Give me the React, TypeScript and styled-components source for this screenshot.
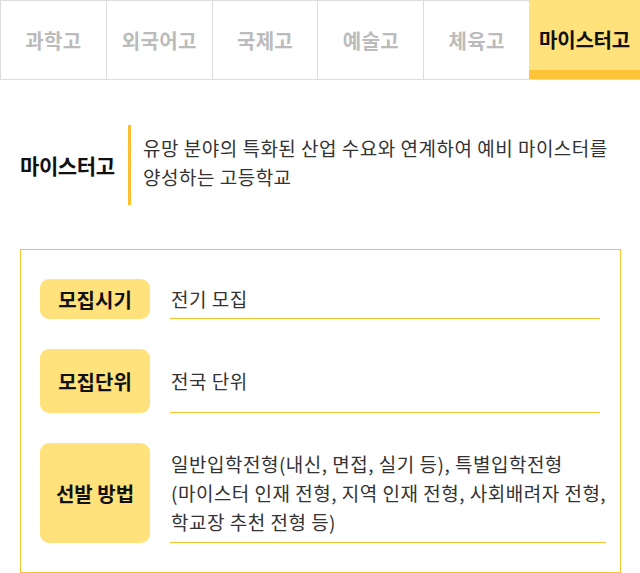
import React from "react";
import styled, { createGlobalStyle } from "styled-components";

const Global = createGlobalStyle`
  html, body { margin: 0; padding: 0; background: #fff; }
  body { font-family: "Noto Sans CJK KR", "Noto Sans", sans-serif; color: #222; }
  * { box-sizing: border-box; }
`;

const Page = styled.div`
  width: 640px;
  height: 573px;
  overflow: hidden;
`;

const Tabs = styled.nav`
  display: flex;
  height: 80px;
  border-top: 1px solid #dddddd;
  border-bottom: 1px solid #dddddd;
`;

const Tab = styled.div<{ $active?: boolean }>`
  display: flex;
  align-items: center;
  justify-content: center;
  font-size: 20px;
  font-weight: 700;
  letter-spacing: ${(p) => (p.$active ? "-0.2px" : "0.3px")};
  color: ${(p) => (p.$active ? "#111" : "#bbbbbb")};
  background: ${(p) => (p.$active ? "#ffe27c" : "#fff")};
  border-left: ${(p) => (p.$active ? "none" : "1px solid #dddddd")};
  margin-top: ${(p) => (p.$active ? "-1px" : "0")};
  border-bottom: ${(p) => (p.$active ? "9px solid #ffc338" : "none")};
  padding-top: ${(p) => (p.$active ? "8px" : "1px")};
  flex: ${(p) => (p.$active ? "0 0 111px" : "1")};
`;

const Intro = styled.section`
  display: flex;
  align-items: stretch;
  margin: 45px 0 0 20px;
  height: 80px;
`;

const IntroTitle = styled.h2`
  margin: 0;
  width: 108px;
  display: flex;
  align-items: center;
  font-size: 21px;
  font-weight: 700;
  letter-spacing: -0.4px;
  color: #111;
`;

const Divider = styled.div`
  width: 3px;
  background: #ffbe2e;
`;

const IntroText = styled.p`
  margin: 0 0 0 12px;
  padding-bottom: 6px;
  align-self: center;
  font-size: 19px;
  line-height: 29px;
  color: #333;
  letter-spacing: 0.5px;
  white-space: nowrap;
`;

const Box = styled.section`
  margin: 44px 19px 0 20px;
  border: 1px solid #ffc02e;
  padding: 29px 20px 29px 19px;
  display: flex;
  flex-direction: column;
  gap: 30px;
`;

const Row = styled.div<{ $h: number }>`
  display: flex;
  gap: 20px;
  min-height: ${(p) => p.$h}px;
`;

const Label = styled.div`
  flex: 0 0 110px;
  background: #ffe27c;
  border-radius: 9px;
  display: flex;
  align-items: center;
  justify-content: center;
  font-size: 20px;
  font-weight: 700;
  color: #111;
  letter-spacing: 0px;
`;

const Value = styled.div`
  flex: 1;
  display: flex;
  align-items: center;
  border-bottom: 1.5px solid #ffc02e;
  font-size: 19px;
  line-height: 29px;
  color: #333;
  letter-spacing: 0.5px;
  padding: 0 0 1px 1px;
  white-space: nowrap;
`;

const tabs = ["과학고", "외국어고", "국제고", "예술고", "체육고", "마이스터고"];

export default function App() {
  return (
    <Page>
      <Global />
      <Tabs>
        {tabs.map((t, i) => (
          <Tab key={t} $active={i === tabs.length - 1}>
            {t}
          </Tab>
        ))}
      </Tabs>
      <Intro>
        <IntroTitle>마이스터고</IntroTitle>
        <Divider />
        <IntroText>
          유망 분야의 특화된 산업 수요와 연계하여 예비 마이스터를
          <br />
          양성하는 고등학교
        </IntroText>
      </Intro>
      <Box>
        <Row $h={40}>
          <Label>모집시기</Label>
          <Value>전기 모집</Value>
        </Row>
        <Row $h={64}>
          <Label>모집단위</Label>
          <Value>전국 단위</Value>
        </Row>
        <Row $h={100}>
          <Label>선발 방법</Label>
          <Value>
            <span>
              일반입학전형(내신, 면접, 실기 등), 특별입학전형
              <br />
              (마이스터 인재 전형, 지역 인재 전형, 사회배려자 전형,
              <br />
              학교장 추천 전형 등)
            </span>
          </Value>
        </Row>
      </Box>
    </Page>
  );
}
